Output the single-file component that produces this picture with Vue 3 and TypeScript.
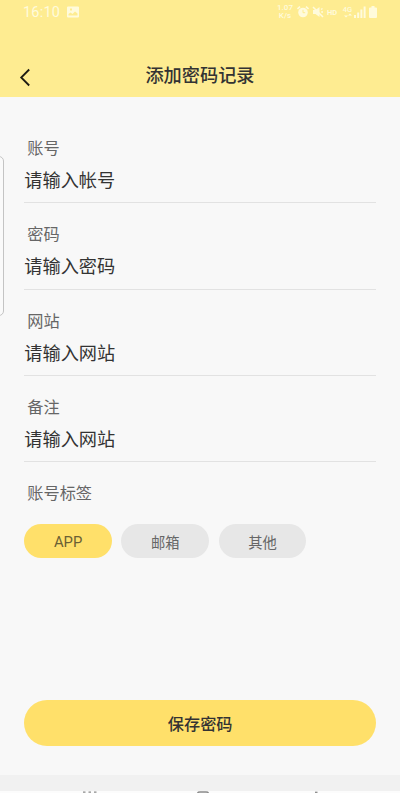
<script setup lang="ts">
import { ref } from 'vue'

interface Field {
  label: string
  hint: string
}

const fields: Field[] = [
  { label: '账号', hint: '请输入帐号' },
  { label: '密码', hint: '请输入密码' },
  { label: '网站', hint: '请输入网站' },
  { label: '备注', hint: '请输入网站' },
]
const tags: string[] = ['APP', '邮箱', '其他']
const selected = ref<string>('APP')
</script>

<template>
  <div class="screen">
    <header class="top">
      <div class="status">
        <span class="clock">16:10</span>
        <svg class="photo" width="12" height="12" viewBox="0 0 12 12">
          <path fill-rule="evenodd" d="M1 0.500h10a1 1 0 0 1 1 1v9a1 1 0 0 1-1 1H1a1 1 0 0 1-1-1v-9a1 1 0 0 1 1-1zM1.500 9.500h9V7.500L8 5.500 5.500 8 3.500 6.500l-2 1.500zM3 2.500v2h2v-2z" />
        </svg>
        <span class="speed"><span>1.07</span><span>K/s</span></span>
        <svg class="alarm" width="12" height="12" viewBox="0 0 12 12">
          <path d="M0.500 3L3 0.700M11.500 3L9 0.700" stroke-width="1.600" />
          <circle cx="6" cy="6.500" r="4.800" />
          <path class="hand" d="M6 3.800V6.700H8.200" />
        </svg>
        <svg class="mute" width="12" height="12" viewBox="0 0 12 12">
          <path d="M1 4h2.500L7.500 1v10L3.500 8H1z" />
          <path d="M1 1l10 10M9 3.500l1.500-1M9.200 6H11" stroke-width="1.500" />
        </svg>
        <span class="hd">HD</span>
        <span class="net"><span>4G</span><svg width="8" height="5" viewBox="0 0 8 5"><path d="M0 2.500l2 2 2-2zM4 2.500l2-2 2 2z" /></svg></span>
        <svg class="signal" width="12" height="12" viewBox="0 0 12 12">
          <path d="M0 9h2v3H0zM3.200 6.500h2V12h-2zM6.400 3.500h2V12h-2zM9.600 0.500h2V12h-2z" />
        </svg>
        <svg class="battery" width="8" height="12" viewBox="0 0 8 12">
          <path d="M2.500 0h3v1.500H7a1 1 0 0 1 1 1V11a1 1 0 0 1-1 1H1a1 1 0 0 1-1-1V2.500a1 1 0 0 1 1-1h1.500z" />
        </svg>
      </div>
      <div class="bar">
        <svg class="back" width="12" height="19" viewBox="0 0 12 19">
          <path d="M10.200 1.500L2.200 9.500l8 8" />
        </svg>
        <h1>添加密码记录</h1>
      </div>
    </header>

    <main class="form">
      <section v-for="f in fields" :key="f.label" class="field">
        <div class="label">{{ f.label }}</div>
        <div class="value">{{ f.hint }}</div>
      </section>
      <div class="label tag-label">账号标签</div>
      <div class="tags">
        <button
          v-for="t in tags"
          :key="t"
          class="tag"
          :class="{ on: t === selected }"
          @click="selected = t"
        >{{ t }}</button>
      </div>
      <button class="save">保存密码</button>
    </main>

    <footer class="nav">
      <svg width="18" height="2" viewBox="0 0 18 2"><path d="M2 1.200h2.500M7.500 1.200H10M13 1.200h2.500" /></svg>
      <svg width="16" height="2" viewBox="0 0 16 2"><path d="M2.500 2Q3 1 5 1h6q2 0 2.500 1" /></svg>
      <svg width="16" height="2" viewBox="0 0 16 2"><path d="M8 1.300h2.500" /></svg>
    </footer>
    <div class="edge-handle"></div>
  </div>
</template>

<style>
body {
  margin: 0;
  background: #f8f8f8;
}
</style>

<style scoped>
.screen {
  position: relative;
  box-sizing: border-box;
  display: flex;
  flex-direction: column;
  width: 400px;
  height: 793px;
  overflow: hidden;
  background: #f8f8f8;
  color: #333;
  font-family: Roboto, "Noto Sans CJK SC", sans-serif;
}
.top {
  height: 97px;
  flex: none;
  background: #feec91;
}
.status {
  display: flex;
  align-items: center;
  height: 24px;
  padding-left: 23px;
  color: #fffbdc;
  fill: #fffbdc;
  stroke: none;
}
.status svg {
  flex: none;
}
.clock {
  width: 38px;
  padding-top: 1px;
  font-size: 14.500px;
  line-height: 23px;
  letter-spacing: 0.200px;
}
.photo {
  margin-left: 6px;
}
.speed {
  display: flex;
  flex-direction: column;
  align-items: center;
  width: 18px;
  margin-left: 197px;
  font-size: 8px;
  font-weight: 500;
  line-height: 8px;
}
.alarm {
  margin-left: 3px;
  stroke: #fffbdc;
}
.alarm circle {
  stroke: none;
}
.alarm .hand {
  fill: none;
  stroke: #feec91;
}
.mute {
  margin-left: 3px;
}
.mute path + path {
  stroke: #fffbdc;
}
.hd {
  width: 12px;
  margin-left: 3px;
  font-size: 7.500px;
  font-weight: 700;
}
.net {
  display: flex;
  flex-direction: column;
  align-items: center;
  width: 9px;
  margin-left: 4px;
  font-size: 7.500px;
  font-weight: 500;
  line-height: 7px;
}
.signal {
  margin-left: 2px;
}
.battery {
  margin-left: 3px;
}
.bar {
  position: relative;
  display: flex;
  align-items: center;
  justify-content: center;
  height: 54px;
  margin-top: 25px;
}
.back {
  position: absolute;
  left: 19px;
  top: 19px;
  fill: none;
  stroke: #1d1b12;
  stroke-width: 1.800;
}
h1 {
  margin: 0;
  font-size: 18.200px;
  font-weight: 500;
  line-height: 28px;
}
.form {
  display: flex;
  flex-direction: column;
  flex: none;
  box-sizing: border-box;
  height: 678px;
  padding: 20px 24px 0 24.300px;
}
.field {
  box-sizing: border-box;
  height: 86.300px;
  padding-top: 20px;
  border-bottom: 1px solid #e2e2e2;
}
.label {
  padding-left: 3px;
  font-size: 16.200px;
  line-height: 24px;
  color: #666;
}
.value {
  margin-top: 6px;
  font-size: 18.200px;
  line-height: 28px;
}
.tag-label {
  margin-top: 20px;
}
.tags {
  display: flex;
  gap: 9.500px;
  margin-top: 18px;
}
button {
  border: 0;
  padding: 0;
  font-family: inherit;
}
.tag {
  width: 87.700px;
  height: 34px;
  border-radius: 17px;
  background: #e7e7e7;
  color: #666;
  font-size: 14.300px;
}
.tag.on {
  padding-top: 1px;
  background: #ffe06a;
  color: #6b6034;
  font-size: 14.800px;
}
.save {
  height: 46px;
  margin-top: auto;
  margin-bottom: 29px;
  border-radius: 23px;
  background: #ffe06a;
  color: #333;
  font-size: 16.200px;
  font-weight: 500;
}
.nav {
  display: flex;
  align-items: flex-end;
  justify-content: space-between;
  box-sizing: border-box;
  height: 18px;
  padding: 0 77px 0 81px;
  background: linear-gradient(#f1f1f1 16px, #fcfcfc 16px);
  fill: none;
  stroke: #8a8a8a;
  stroke-width: 1.300;
}
.edge-handle {
  position: absolute;
  left: -6px;
  top: 156px;
  box-sizing: border-box;
  width: 10px;
  height: 160px;
  border: 1px solid #c4c4c4;
  border-radius: 5px;
  background: #fafafa;
}
</style>
